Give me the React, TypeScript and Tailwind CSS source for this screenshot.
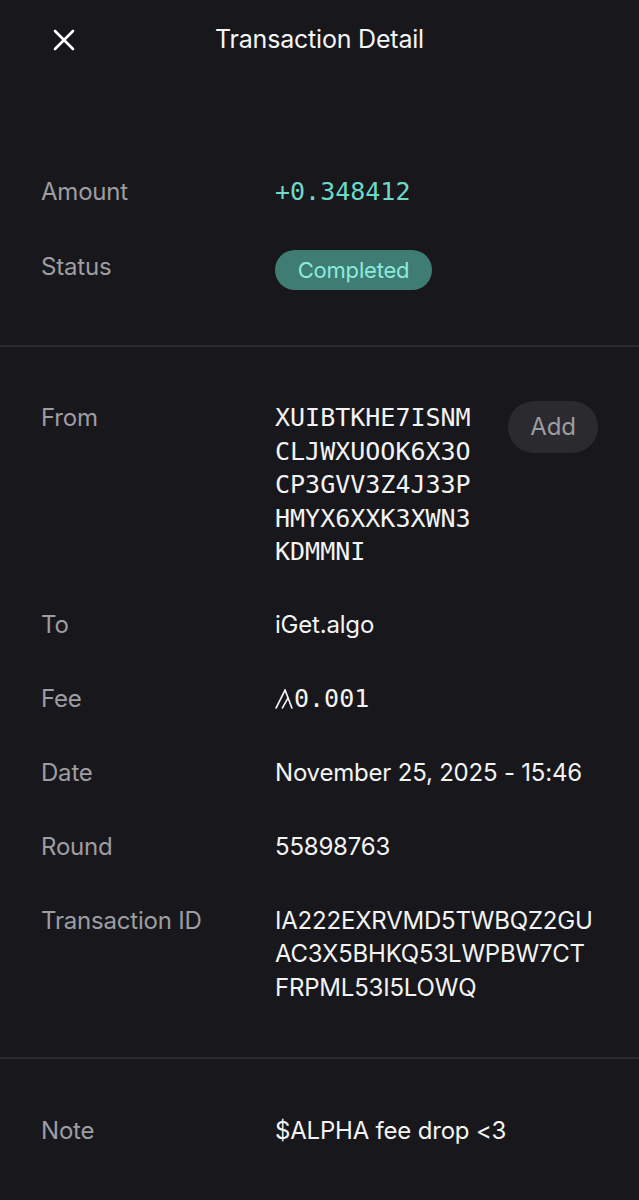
import type { ReactNode } from "react";

const sans = "font-['Inter','Noto_Sans',sans-serif]";
const mono = "font-['DejaVu_Sans_Mono','Liberation_Mono',monospace]";

function AlgoMark() {
  return (
    <svg width="18" height="20" viewBox="0 0 17 19" className="mr-[1px] inline-block align-[-2px]" fill="none" stroke="currentColor" strokeWidth="1.6" strokeLinecap="round">
      <path d="M1 18 L9.5 1" />
      <path d="M9.5 1 L16 18" />
      <path d="M7 18 L12.4 8.5" />
    </svg>
  );
}

function Row({ label, children, className = "" }: { label: string; children: ReactNode; className?: string }) {
  return (
    <div className={`flex items-start ${className}`}>
      <div className="w-[234px] shrink-0 text-[24px] leading-[34px] tracking-[-0.2px] text-[#9d9da2]">{label}</div>
      <div className="flex-1 text-[24px] leading-[34px] tracking-[-0.2px] text-[#f3f3f3]">{children}</div>
    </div>
  );
}

export default function App() {
  return (
    <div className={`min-h-[1200px] w-full bg-[#18181c] ${sans}`}>
      {/* header */}
      <div className="relative flex h-[80px] items-center justify-center">
        <button className="absolute left-[52px] top-[28px] text-white">
          <svg width="24" height="24" viewBox="0 0 24 24" fill="none" stroke="currentColor" strokeWidth="2.6" strokeLinecap="round">
            <path d="M3 3 L21 21" />
            <path d="M21 3 L3 21" />
          </svg>
        </button>
        <h1 className="text-[25px] tracking-[-0.2px] text-[#f5f5f5]">Transaction Detail</h1>
      </div>

      <div className="flex flex-col gap-[41px] px-[41px] pt-[95px] pb-[55px]">
        <Row label="Amount">
          <span className={`${mono} text-[25px] tracking-normal text-[#6fd8c8]`}>+0.348412</span>
        </Row>
        <Row label="Status">
          <span className="inline-flex h-[40px] w-[157px] items-center justify-center rounded-full bg-[#3f7c74] text-[22px] text-[#8ceadb]">
            Completed
          </span>
        </Row>
      </div>

      <div className="h-[2px] w-full bg-[#2a2a2f]" />

      <div className="flex flex-col gap-10 pl-[41px] pr-[41px] pt-[54px] pb-[53px]">
        <Row label="From" className="mb-[-1px]">
          <div className="flex items-start justify-between">
            <div className={`${mono} text-[25px] leading-[33.5px] tracking-normal`}>
              <div>XUIBTKHE7ISNM</div>
              <div>CLJWXUOOK6X3O</div>
              <div>CP3GVV3Z4J33P</div>
              <div>HMYX6XXK3XWN3</div>
              <div>KDMMNI</div>
            </div>
            <button className="h-[52px] w-[90px] rounded-full bg-[#2a2a2f] text-[24px] text-[#9c9ca1]">Add</button>
          </div>
        </Row>
        <Row label="To">iGet.algo</Row>
        <Row label="Fee">
          <span className={`${mono} text-[25px] tracking-normal`}>
            <AlgoMark />0.001
          </span>
        </Row>
        <Row label="Date">November 25, 2025 - 15:46</Row>
        <Row label="Round">55898763</Row>
        <Row label="Transaction ID">
          <div className="leading-[33.5px]">
            <div>IA222EXRVMD5TWBQZ2GU</div>
            <div>AC3X5BHKQ53LWPBW7CT</div>
            <div>FRPML53I5LOWQ</div>
          </div>
        </Row>
      </div>

      <div className="h-[2px] w-full bg-[#2a2a2f]" />

      <div className="px-[41px] pt-[55px]">
        <Row label="Note">$ALPHA fee drop &lt;3</Row>
      </div>
    </div>
  );
}
